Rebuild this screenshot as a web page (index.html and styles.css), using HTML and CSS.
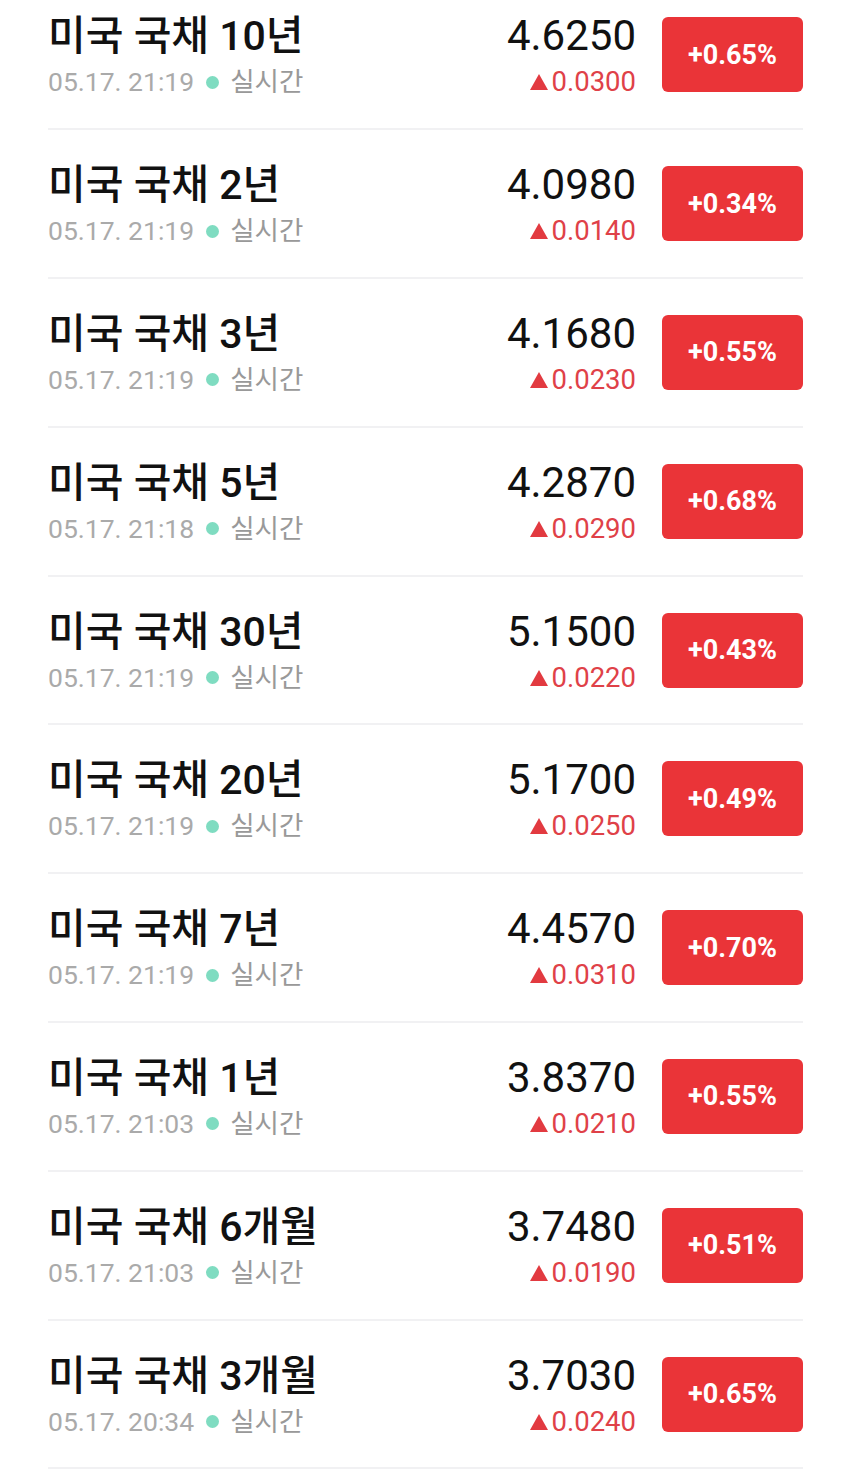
FILE: index.html
```html
<!DOCTYPE html>
<html lang="ko">
<head>
    <meta charset="UTF-8">
    <meta name="viewport" content="width=device-width, initial-scale=1.0">
    <title>미국 국채</title>
    <link rel="stylesheet" href="styles.css">
</head>
<body>
    <ul class="bond-list">
        <li class="bond-row">
            <div class="bond-info">
                <div class="bond-name">미국 국채 10년</div>
                <div class="bond-meta"><span class="time">05.17. 21:19</span><span class="dot"></span><span class="live">실시간</span></div>
            </div>
            <div class="bond-price">
                <div class="price">4.6250</div>
                <div class="change"><span class="arrow"></span>0.0300</div>
            </div>
            <div class="badge">+0.65%</div>
        </li>
        <li class="bond-row">
            <div class="bond-info">
                <div class="bond-name">미국 국채 2년</div>
                <div class="bond-meta"><span class="time">05.17. 21:19</span><span class="dot"></span><span class="live">실시간</span></div>
            </div>
            <div class="bond-price">
                <div class="price">4.0980</div>
                <div class="change"><span class="arrow"></span>0.0140</div>
            </div>
            <div class="badge">+0.34%</div>
        </li>
        <li class="bond-row">
            <div class="bond-info">
                <div class="bond-name">미국 국채 3년</div>
                <div class="bond-meta"><span class="time">05.17. 21:19</span><span class="dot"></span><span class="live">실시간</span></div>
            </div>
            <div class="bond-price">
                <div class="price">4.1680</div>
                <div class="change"><span class="arrow"></span>0.0230</div>
            </div>
            <div class="badge">+0.55%</div>
        </li>
        <li class="bond-row">
            <div class="bond-info">
                <div class="bond-name">미국 국채 5년</div>
                <div class="bond-meta"><span class="time">05.17. 21:18</span><span class="dot"></span><span class="live">실시간</span></div>
            </div>
            <div class="bond-price">
                <div class="price">4.2870</div>
                <div class="change"><span class="arrow"></span>0.0290</div>
            </div>
            <div class="badge">+0.68%</div>
        </li>
        <li class="bond-row">
            <div class="bond-info">
                <div class="bond-name">미국 국채 30년</div>
                <div class="bond-meta"><span class="time">05.17. 21:19</span><span class="dot"></span><span class="live">실시간</span></div>
            </div>
            <div class="bond-price">
                <div class="price">5.1500</div>
                <div class="change"><span class="arrow"></span>0.0220</div>
            </div>
            <div class="badge">+0.43%</div>
        </li>
        <li class="bond-row">
            <div class="bond-info">
                <div class="bond-name">미국 국채 20년</div>
                <div class="bond-meta"><span class="time">05.17. 21:19</span><span class="dot"></span><span class="live">실시간</span></div>
            </div>
            <div class="bond-price">
                <div class="price">5.1700</div>
                <div class="change"><span class="arrow"></span>0.0250</div>
            </div>
            <div class="badge">+0.49%</div>
        </li>
        <li class="bond-row">
            <div class="bond-info">
                <div class="bond-name">미국 국채 7년</div>
                <div class="bond-meta"><span class="time">05.17. 21:19</span><span class="dot"></span><span class="live">실시간</span></div>
            </div>
            <div class="bond-price">
                <div class="price">4.4570</div>
                <div class="change"><span class="arrow"></span>0.0310</div>
            </div>
            <div class="badge">+0.70%</div>
        </li>
        <li class="bond-row">
            <div class="bond-info">
                <div class="bond-name">미국 국채 1년</div>
                <div class="bond-meta"><span class="time">05.17. 21:03</span><span class="dot"></span><span class="live">실시간</span></div>
            </div>
            <div class="bond-price">
                <div class="price">3.8370</div>
                <div class="change"><span class="arrow"></span>0.0210</div>
            </div>
            <div class="badge">+0.55%</div>
        </li>
        <li class="bond-row">
            <div class="bond-info">
                <div class="bond-name">미국 국채 6개월</div>
                <div class="bond-meta"><span class="time">05.17. 21:03</span><span class="dot"></span><span class="live">실시간</span></div>
            </div>
            <div class="bond-price">
                <div class="price">3.7480</div>
                <div class="change"><span class="arrow"></span>0.0190</div>
            </div>
            <div class="badge">+0.51%</div>
        </li>
        <li class="bond-row">
            <div class="bond-info">
                <div class="bond-name">미국 국채 3개월</div>
                <div class="bond-meta"><span class="time">05.17. 20:34</span><span class="dot"></span><span class="live">실시간</span></div>
            </div>
            <div class="bond-price">
                <div class="price">3.7030</div>
                <div class="change"><span class="arrow"></span>0.0240</div>
            </div>
            <div class="badge">+0.65%</div>
        </li>
    </ul>
</body>
</html>
```

FILE: styles.css
```css
body {
    margin: 0;
    background: #fff;
    font-family: Roboto, "Noto Sans CJK KR", sans-serif;
    overflow: hidden;
}
.bond-list {
    list-style: none;
    margin: -18.5px 47px 0 48px;
    padding: 0;
}
.bond-row {
    display: flex;
    align-items: center;
    height: 148.8px;
    box-sizing: border-box;
    border-bottom: 2px solid #f1f1f3;
}
.bond-info {
    flex: 1;
}
.bond-name {
    font-size: 41px;
    font-weight: 500;
    line-height: 48px;
    color: #111;
}
.bond-meta {
    display: flex;
    align-items: center;
    margin-top: 7px;
    font-size: 26.5px;
    line-height: 30px;
}
.time {
    color: #aaa;
}
.dot {
    width: 13px;
    height: 13px;
    border-radius: 50%;
    background: #7fdcc1;
    margin: 0 11px 0 12px;
}
.live {
    color: #999;
}
.bond-price {
    text-align: right;
}
.price {
    font-size: 42px;
    line-height: 48px;
    color: #111;
}
.change {
    margin-top: 7px;
    font-size: 27.5px;
    line-height: 30px;
    color: #df4148;
}
.arrow {
    display: inline-block;
    width: 0;
    height: 0;
    border-left: 9px solid transparent;
    border-right: 9px solid transparent;
    border-bottom: 16px solid #e23a40;
    margin-right: 3px;
    vertical-align: 1px;
}
.badge {
    width: 141px;
    height: 75px;
    margin-left: 26px;
    border-radius: 6px;
    background: #ea3438;
    color: #fff;
    font-size: 27px;
    font-weight: 700;
    display: flex;
    align-items: center;
    justify-content: center;
}
```
